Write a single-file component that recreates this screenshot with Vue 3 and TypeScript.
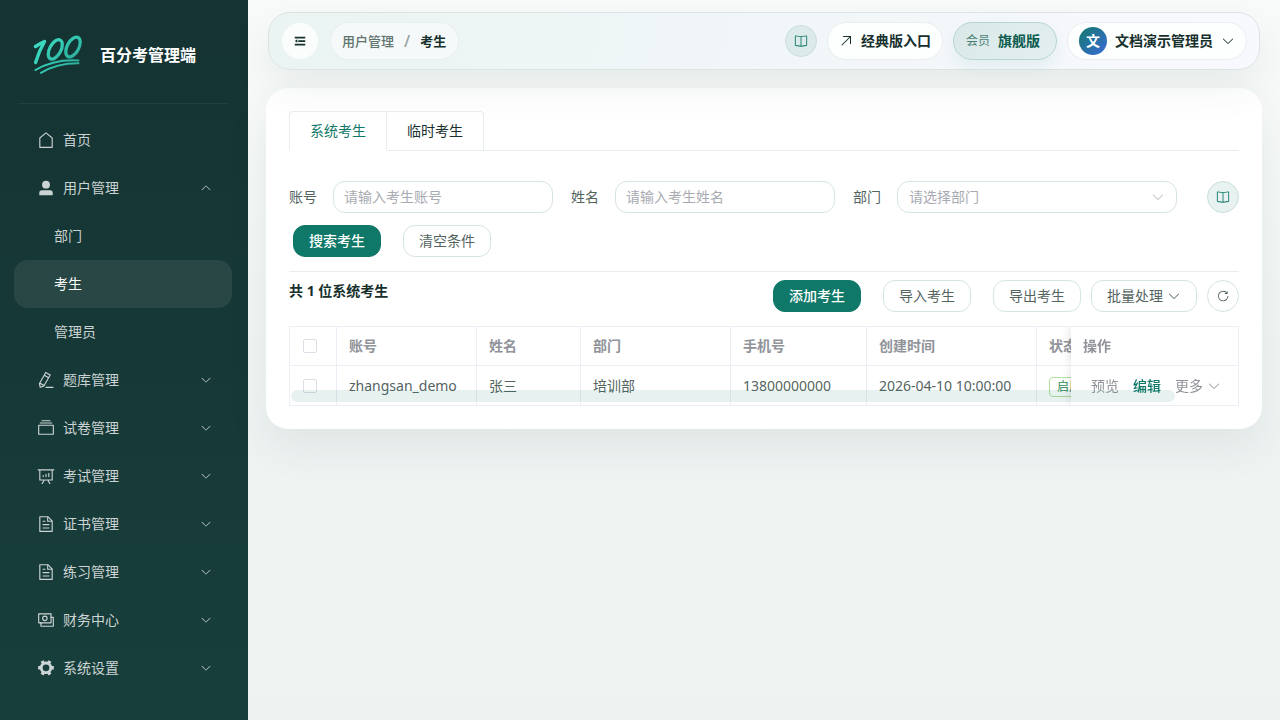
<script setup lang="ts">
import { ref } from 'vue'

interface MenuItem {
  label: string
  icon?: string
  open?: boolean
  children?: string[]
  leaf?: boolean
}

const icons: Record<string, string[]> = {
  house: ['M192 413.952V896h640V413.952L512 147.328zM139.52 374.4l352-293.312a32 32 0 0 1 40.96 0l352 293.312A32 32 0 0 1 896 398.976V928a32 32 0 0 1-32 32H160a32 32 0 0 1-32-32V398.976a32 32 0 0 1 11.52-24.576'],
  user: ['M288 320a224 224 0 1 0 448 0 224 224 0 1 0-448 0m544 608H160a32 32 0 0 1-32-32v-96a160 160 0 0 1 160-160h448a160 160 0 0 1 160 160v96a32 32 0 0 1-32 32z'],
  pen: ['m199.04 672.64 193.984 112 224-387.968-193.92-112-224 388.032zm-23.872 60.16 32.896 148.288 144.896-45.696zM455.04 229.248l193.92 112 56.704-98.112-193.984-112zM104.32 708.8l384-665.024 304.768 175.936L409.152 884.8h.064l-248.448 78.336zm384 254.272v-64h448v64z'],
  files: ['M128 384v448h768V384zm-32-64h832a32 32 0 0 1 32 32v512a32 32 0 0 1-32 32H96a32 32 0 0 1-32-32V352a32 32 0 0 1 32-32m64-128h704v64H160zm96-128h512v64H256z'],
  board: ['m665.216 768 110.848 192h-73.856L591.36 768H433.024L322.176 960H248.32l110.848-192H160a32 32 0 0 1-32-32V192H64a32 32 0 0 1 0-64h896a32 32 0 1 1 0 64h-64v544a32 32 0 0 1-32 32zM832 192H192v512h640zM352 448a32 32 0 0 1 32 32v64a32 32 0 0 1-64 0v-64a32 32 0 0 1 32-32m160-64a32 32 0 0 1 32 32v128a32 32 0 0 1-64 0V416a32 32 0 0 1 32-32m160-64a32 32 0 0 1 32 32v192a32 32 0 1 1-64 0V352a32 32 0 0 1 32-32'],
  document: ['M832 384H576V128H192v768h640zm-26.496-64L640 154.496V320zM160 64h480l256 256v608a32 32 0 0 1-32 32H160a32 32 0 0 1-32-32V96a32 32 0 0 1 32-32m160 448h384v64H320zm0-192h160v64H320zm0 384h384v64H320z'],
  money: [
    'M256 640v192h640V384H768v-64h150.976c14.272 0 19.456 1.472 24.64 4.288a29.06 29.06 0 0 1 12.16 12.096c2.752 5.184 4.224 10.368 4.224 24.64v493.952c0 14.272-1.472 19.456-4.288 24.64a29.06 29.06 0 0 1-12.096 12.16c-5.184 2.752-10.368 4.224-24.64 4.224H233.024c-14.272 0-19.456-1.472-24.64-4.288a29.06 29.06 0 0 1-12.16-12.096c-2.688-5.184-4.224-10.368-4.224-24.576V640z',
    'M768 192H128v448h640zm64-22.976v493.952c0 14.272-1.472 19.456-4.288 24.64a29.06 29.06 0 0 1-12.096 12.16c-5.184 2.752-10.304 4.224-24.64 4.224H105.024c-14.272 0-19.456-1.472-24.64-4.288a29.06 29.06 0 0 1-12.16-12.096C65.536 682.432 64 677.248 64 663.04V169.024c0-14.272 1.472-19.456 4.288-24.64a29.06 29.06 0 0 1 12.096-12.16C85.568 129.536 90.752 128 104.96 128h685.952c14.272 0 19.456 1.472 24.64 4.288a29.06 29.06 0 0 1 12.16 12.096c2.752 5.184 4.224 10.368 4.224 24.64z',
    'M448 576a160 160 0 1 1 0-320 160 160 0 0 1 0 320m0-64a96 96 0 1 0 0-192 96 96 0 0 0 0 192',
  ],
  gear: ['M764.416 254.72a351.68 351.68 0 0 1 86.336 149.184H960v192.064H850.752a351.68 351.68 0 0 1-86.336 149.312l54.72 94.72-166.272 96-54.592-94.72a352.64 352.64 0 0 1-172.48 0L371.136 936l-166.272-96 54.72-94.72a351.68 351.68 0 0 1-86.336-149.312H64v-192h109.248a351.68 351.68 0 0 1 86.336-149.312L204.8 160l166.208-96h.192l54.656 94.592a352.64 352.64 0 0 1 172.48 0L652.8 64h.128L819.2 160l-54.72 94.72zM704 499.968a192 192 0 1 0-384 0 192 192 0 0 0 384 0'],
}
const arrow = 'M831.872 340.864 512 652.672 192.128 340.864a30.59 30.59 0 0 0-42.752 0 29.12 29.12 0 0 0 0 41.6L489.664 714.24a32 32 0 0 0 44.672 0l340.288-331.712a29.12 29.12 0 0 0 0-41.728 30.59 30.59 0 0 0-42.752 0z'
const book = 'm512 863.36 384-54.848v-638.72L525.568 222.72a96 96 0 0 1-27.136 0L128 169.792v638.72zM137.024 106.432l370.432 52.928a32 32 0 0 0 9.088 0l370.432-52.928A64 64 0 0 1 960 169.792v638.72a64 64 0 0 1-54.976 63.36l-388.48 55.488a32 32 0 0 1-9.088 0l-388.48-55.488A64 64 0 0 1 64 808.512v-638.72a64 64 0 0 1 73.024-63.36z'

const menu = ref<MenuItem[]>([
  { label: '首页', icon: 'house', leaf: true },
  { label: '用户管理', icon: 'user', open: true, children: ['部门', '考生', '管理员'] },
  { label: '题库管理', icon: 'pen' },
  { label: '试卷管理', icon: 'files' },
  { label: '考试管理', icon: 'board' },
  { label: '证书管理', icon: 'document' },
  { label: '练习管理', icon: 'document' },
  { label: '财务中心', icon: 'money' },
  { label: '系统设置', icon: 'gear' },
])
const activePage = ref('考生')
const tabs = ['系统考生', '临时考生']
const activeTab = ref(tabs[0])
const account = ref('')
const realName = ref('')
const department = ref('')

interface Student {
  account: string
  name: string
  department: string
  phone: string
  created: string
  status: string
}
const students: Student[] = [
  { account: 'zhangsan_demo', name: '张三', department: '培训部', phone: '13800000000', created: '2026-04-10 10:00:00', status: '启用' },
]
const clearFilters = () => {
  account.value = ''
  realName.value = ''
  department.value = ''
}
</script>

<template>
  <div class="layout">
    <aside class="sidebar">
      <div class="brand">
        <svg class="logo" viewBox="0 0 52 40" aria-hidden="true">
          <defs>
            <linearGradient id="logo-fill" gradientUnits="userSpaceOnUse" x1="0" y1="0" x2="50" y2="40">
              <stop offset="0" stop-color="#3fe6cb" />
              <stop offset="1" stop-color="#27a493" />
            </linearGradient>
          </defs>
          <g fill="none" stroke="url(#logo-fill)" stroke-linecap="round" stroke-linejoin="round">
            <path stroke-width="3.4" d="M3.5 11.5Q8 8.5 12.5 6.5Q7 16 3.6 27.5" />
            <ellipse stroke-width="3.2" cx="23.3" cy="14.4" rx="5.6" ry="10.6" transform="rotate(28 23.3 14.4)" />
            <ellipse stroke-width="3.2" cx="41" cy="12" rx="5.8" ry="10.8" transform="rotate(28 41 12)" />
            <path stroke-width="2" d="M3.5 35Q22 24 46.5 25.4M9 37.8Q25 28 46.5 28.2" />
          </g>
        </svg>
        <span class="brand-name">百分考管理端</span>
      </div>
      <nav class="menu">
        <template v-for="item in menu" :key="item.label">
          <button type="button" class="menu-item" @click="item.open = !item.open">
            <svg class="menu-icon" viewBox="0 0 1024 1024"><path v-for="d in icons[item.icon!]" :key="d" :d="d" /></svg>
            <span class="menu-label">{{ item.label }}</span>
            <svg v-if="!item.leaf" class="arrow" :class="{ up: item.open }" viewBox="0 0 1024 1024"><path :d="arrow" /></svg>
          </button>
          <template v-if="item.open && item.children">
            <button
              v-for="child in item.children"
              :key="child"
              type="button"
              class="menu-item sub"
              :class="{ active: child === activePage }"
              @click="activePage = child"
            >{{ child }}</button>
          </template>
        </template>
      </nav>
    </aside>

    <main class="main">
      <header class="topbar">
        <button type="button" class="fold" aria-label="收起菜单">
          <svg viewBox="0 0 1024 1024"><path d="M896 192H128v128h768zm0 256H384v128h512zm0 256H128v128h768zM320 384 128 512l192 128z" /></svg>
        </button>
        <nav class="pill crumbs">
          <a href="#">用户管理</a><span class="slash">/</span><strong>考生</strong>
        </nav>
        <div class="top-actions">
          <button type="button" class="guide" aria-label="帮助文档">
            <svg viewBox="0 0 1024 1024"><path :d="book" /><path d="M480 192h64v704h-64z" /></svg>
          </button>
          <a class="pill classic" href="#">
            <svg viewBox="0 0 1024 1024"><path d="M768 256H353.6a32 32 0 1 1 0-64H800a32 32 0 0 1 32 32v448a32 32 0 0 1-64 0z" /><path d="M777.344 201.344a32 32 0 0 1 45.312 45.312l-544 544a32 32 0 0 1-45.312-45.312z" /></svg>
            经典版入口
          </a>
          <button type="button" class="pill member"><span>会员</span><strong>旗舰版</strong></button>
          <button type="button" class="pill account">
            <span class="avatar">文</span>
            <span>文档演示管理员</span>
            <svg viewBox="0 0 1024 1024"><path :d="arrow" /></svg>
          </button>
        </div>
      </header>

      <section class="card">
        <div class="tabs" role="tablist">
          <button
            v-for="tab in tabs"
            :key="tab"
            type="button"
            role="tab"
            class="tab"
            :class="{ active: tab === activeTab }"
            :aria-selected="tab === activeTab"
            @click="activeTab = tab"
          >{{ tab }}</button>
        </div>

        <form class="filters" @submit.prevent>
          <div class="fields">
            <div class="field">
              <label for="account">账号</label>
              <input id="account" v-model="account" type="text" placeholder="请输入考生账号" />
            </div>
            <div class="field">
              <label for="real-name">姓名</label>
              <input id="real-name" v-model="realName" type="text" placeholder="请输入考生姓名" />
            </div>
            <div class="field wide">
              <label for="department">部门</label>
              <div class="select">
                <select id="department" v-model="department">
                  <option value="">请选择部门</option>
                  <option value="培训部">培训部</option>
                </select>
                <svg viewBox="0 0 1024 1024"><path :d="arrow" /></svg>
              </div>
            </div>
            <button type="button" class="guide" aria-label="使用说明">
              <svg viewBox="0 0 1024 1024"><path :d="book" /><path d="M480 192h64v704h-64z" /></svg>
            </button>
          </div>
          <div class="submit">
            <button type="submit" class="btn primary">搜索考生</button>
            <button type="button" class="btn" @click="clearFilters">清空条件</button>
          </div>
        </form>

        <div class="toolbar">
          <h2>共 {{ students.length }} 位系统考生</h2>
          <div class="tools">
            <button type="button" class="btn primary">添加考生</button>
            <button type="button" class="btn">导入考生</button>
            <div class="tool-group">
              <button type="button" class="btn">导出考生</button>
              <button type="button" class="btn">批量处理<svg viewBox="0 0 1024 1024"><path :d="arrow" /></svg></button>
              <button type="button" class="refresh" aria-label="刷新">
                <svg viewBox="0 0 1024 1024"><path d="M784.512 230.272v-50.56a32 32 0 1 1 64 0v149.056a32 32 0 0 1-32 32H667.52a32 32 0 1 1 0-64h92.992A320 320 0 1 0 524.8 833.152a320 320 0 0 0 320-320h64a384 384 0 0 1-384 384 384 384 0 0 1-384-384 384 384 0 0 1 643.712-282.88" /></svg>
              </button>
            </div>
          </div>
        </div>

        <div class="table-box">
          <div class="table-scroll">
            <table>
              <colgroup>
                <col class="c-check" /><col class="c-account" /><col class="c-name" /><col class="c-dept" />
                <col class="c-phone" /><col class="c-time" /><col class="c-status" /><col class="c-ops" />
              </colgroup>
              <thead>
                <tr>
                  <th><input type="checkbox" aria-label="全选" /></th>
                  <th>账号</th><th>姓名</th><th>部门</th><th>手机号</th><th>创建时间</th><th>状态</th>
                  <th class="fixed">操作</th>
                </tr>
              </thead>
              <tbody>
                <tr v-for="s in students" :key="s.account">
                  <td><input type="checkbox" :aria-label="s.name" /></td>
                  <td>{{ s.account }}</td>
                  <td>{{ s.name }}</td>
                  <td>{{ s.department }}</td>
                  <td>{{ s.phone }}</td>
                  <td>{{ s.created }}</td>
                  <td><span class="tag">{{ s.status }}</span></td>
                  <td class="fixed">
                    <div class="ops">
                      <button type="button">预览</button>
                      <button type="button" class="edit">编辑</button>
                      <button type="button">更多<svg viewBox="0 0 1024 1024"><path :d="arrow" /></svg></button>
                    </div>
                  </td>
                </tr>
              </tbody>
            </table>
          </div>
          <div class="scroll-thumb"></div>
        </div>
      </section>
    </main>
  </div>
</template>

<style>
body {
  margin: 0;
}
</style>

<style scoped>
.layout,
.layout * {
  box-sizing: border-box;
}
.layout {
  display: flex;
  min-height: 100vh;
  font-family: "Noto Sans", "Noto Sans CJK SC", sans-serif;
  font-size: 14px;
  line-height: 20px;
  color: #17302d;
  background: linear-gradient(180deg, #f9fbfa 0%, #eff4f3 60%, #eef3f2 100%);
}
button,
input,
select {
  font: inherit;
  color: inherit;
  margin: 0;
}
button {
  padding: 0;
  border: 0;
  background: none;
  cursor: pointer;
}
a {
  color: inherit;
  text-decoration: none;
}
svg {
  display: block;
  flex: none;
  fill: currentColor;
}

.sidebar {
  flex: none;
  width: 248px;
  padding: 0 16px 24px 14px;
  background: linear-gradient(180deg, #143332 0%, #183f3c 100%);
}
.brand {
  display: flex;
  align-items: center;
  gap: 16px;
  height: 104px;
  margin: 0 4px 12px;
  padding: 6px 0 0 14px;
  border-bottom: 1px solid rgba(255, 255, 255, 0.06);
}
.logo {
  width: 52px;
  height: 40px;
}
.brand-name {
  font-size: 16px;
  font-weight: 700;
  color: #fff;
}
.menu {
  display: flex;
  flex-direction: column;
}
.menu-item {
  display: flex;
  align-items: center;
  height: 48px;
  padding: 0 20px 0 23px;
  border-radius: 14px;
  color: rgba(255, 255, 255, 0.78);
  text-align: left;
}
.menu-icon {
  width: 18px;
  height: 18px;
  margin-right: 8px;
}
.menu-label {
  flex: 1;
}
.arrow {
  width: 12px;
  height: 12px;
}
.arrow.up {
  transform: rotate(180deg);
}
.menu-item.sub {
  padding-left: 40px;
}
.menu-item.active {
  color: #fff;
  background: rgba(255, 255, 255, 0.08);
}

.main {
  flex: 1;
  min-width: 0;
  padding: 12px 18px 24px;
}
.topbar {
  position: relative;
  z-index: 1;
  display: flex;
  align-items: center;
  height: 58px;
  margin: 0 2px 18px;
  padding: 0 12px 0 13px;
  border: 1px solid #dae5e3;
  border-radius: 22px;
  background: linear-gradient(100deg, #eaf4f2 0%, #f1f6f8 50%, #f8f9fe 100%);
  box-shadow: 0 16px 40px rgba(20, 60, 52, 0.08);
}
.fold {
  display: grid;
  place-items: center;
  width: 36px;
  height: 36px;
  margin-right: 12px;
  border-radius: 50%;
  background: #fbfdfd;
}
.fold svg {
  width: 14px;
  height: 14px;
}
.pill {
  display: flex;
  align-items: center;
  height: 38px;
  border: 1px solid #e9eff0;
  border-radius: 19px;
  background: #fdfefe;
  font-weight: 600;
}
.crumbs {
  padding: 0 12px 0 11px;
  background: #f5f9fa;
  font-size: 13px;
  font-weight: 500;
  color: #5f736f;
}
.crumbs strong {
  font-weight: 700;
  color: #17302d;
}
.slash {
  margin: 0 10px;
  font-size: 16px;
  color: #93a29f;
}
.top-actions {
  display: flex;
  align-items: center;
  gap: 10px;
  margin-left: auto;
}
.guide {
  display: grid;
  place-items: center;
  width: 32px;
  height: 32px;
  border: 1px solid #c9dfdc;
  border-radius: 50%;
  background: #e8f2f0;
  color: #0f7868;
}
.guide svg {
  width: 14px;
  height: 14px;
}
.topbar .guide {
  background: #dcebe9;
}
.classic {
  gap: 7px;
  padding: 0 11px 0 10px;
}
.classic svg {
  width: 16px;
  height: 16px;
}
.member {
  gap: 8px;
  padding: 0 16px 0 12px;
  border-color: #b5d6d2;
  background: linear-gradient(135deg, #d9e9e7, #e4eff0);
  box-shadow: 0 8px 16px rgba(15, 120, 104, 0.07);
  color: #0b5a4e;
}
.member span {
  font-size: 12px;
  font-weight: 400;
  color: #4a8077;
}
.member strong {
  font-weight: 700;
}
.account {
  gap: 8px;
  padding: 0 11px;
}
.account svg {
  width: 14px;
  height: 14px;
}
.avatar {
  display: grid;
  place-items: center;
  width: 28px;
  height: 28px;
  border-radius: 50%;
  background: linear-gradient(135deg, #127a6c, #3a6ad8);
  color: #fff;
  font-weight: 700;
}

.card {
  padding: 23px;
  border-radius: 22px;
  background: #fff;
  box-shadow: 0 18px 40px rgba(20, 60, 52, 0.08);
}
.tabs {
  display: flex;
  height: 40px;
  border-bottom: 1px solid #e8eeed;
}
.tab {
  height: 40px;
  padding: 0 20px;
  border: 1px solid #e8eeed;
  border-left-width: 0;
  background: #fff;
}
.tab:first-child {
  border-left-width: 1px;
  border-radius: 4px 0 0 0;
}
.tab:last-child {
  border-radius: 0 4px 0 0;
}
.tab.active {
  border-bottom-color: #fff;
  color: #0f7868;
}
.filters {
  padding: 30px 0 14px;
  border-bottom: 1px solid #e8eeed;
}
.fields {
  display: flex;
  align-items: center;
  gap: 18px;
}
.field {
  display: flex;
  align-items: center;
  gap: 16px;
  width: 264px;
  color: #53645f;
}
.field.wide {
  width: 324px;
}
.fields .guide {
  margin-left: auto;
}
label {
  flex: none;
}
.field input,
.select {
  flex: 1;
  min-width: 0;
  height: 32px;
}
.field input,
select {
  border: 1px solid #d6e5e2;
  border-radius: 12px;
  background: #fff;
  outline: none;
}
.field input {
  padding: 0 10px 2px;
}
.field input::placeholder {
  color: #a8abb2;
  opacity: 1;
}
.select {
  position: relative;
}
select {
  width: 100%;
  height: 100%;
  padding: 0 11px;
  appearance: none;
  color: #a8abb2;
}
.select svg {
  position: absolute;
  right: 12px;
  top: 9px;
  width: 14px;
  height: 14px;
  color: #b3b7bd;
  pointer-events: none;
}
.submit {
  display: flex;
  gap: 22px;
  padding: 12px 4px 0;
}
.btn {
  display: flex;
  align-items: center;
  justify-content: center;
  gap: 4px;
  height: 32px;
  padding: 0 15px;
  border: 1px solid #d6e5e2;
  border-radius: 12px;
  background: #fff;
  color: #53645f;
}
.btn.primary {
  border-color: #0f7868;
  background: #0f7868;
  color: #fff;
  font-weight: 500;
}
.btn svg {
  width: 14px;
  height: 14px;
}
.toolbar {
  display: flex;
  justify-content: space-between;
  align-items: flex-start;
  padding: 8px 0 14px;
}
h2 {
  margin: 0;
  font-size: 14px;
  line-height: 22px;
  font-weight: 700;
}
.tools {
  display: flex;
  gap: 22px;
}
.tool-group {
  display: flex;
  gap: 10px;
}
.refresh {
  display: grid;
  place-items: center;
  width: 32px;
  height: 32px;
  border: 1px solid #d6e5e2;
  border-radius: 50%;
  color: #53645f;
}
.refresh svg {
  width: 14px;
  height: 14px;
}

.table-box {
  position: relative;
  border: 1px solid #ebeef5;
  border-bottom-width: 0;
}
.table-scroll {
  overflow: hidden;
}
table {
  width: 100%;
  min-width: 1020px;
  table-layout: fixed;
  border-collapse: separate;
  border-spacing: 0;
}
.c-check { width: 47px; }
.c-account { width: 140px; }
.c-name { width: 104px; }
.c-dept { width: 150px; }
.c-phone { width: 136px; }
.c-time { width: 170px; }
.c-ops { width: 167px; }
th,
td {
  height: 40px;
  padding: 0 12px;
  border-right: 1px solid #ebeef5;
  border-bottom: 1px solid #ebeef5;
  background: #fff;
  text-align: left;
  white-space: nowrap;
  color: #53645f;
}
th {
  height: 39px;
  font-weight: 700;
  color: #909399;
}
.fixed {
  position: sticky;
  right: 0;
  border-right: 0;
  box-shadow: 0 0 10px rgba(0, 0, 0, 0.14);
  clip-path: inset(0 0 0 -12px);
}
th:nth-last-child(2),
td:nth-last-child(2) {
  border-right: 0;
}
input[type="checkbox"] {
  display: block;
  appearance: none;
  width: 14px;
  height: 14px;
  margin-left: 1px;
  border: 1px solid #dcdfe6;
  border-radius: 2px;
  background: #fff;
}
.tag {
  display: inline-block;
  height: 20px;
  margin-top: 2px;
  padding: 0 7px;
  border: 1px solid #b3e19d;
  border-radius: 4px;
  font-size: 12px;
  line-height: 18px;
  color: #2c8c50;
  vertical-align: middle;
}
.ops {
  display: flex;
  gap: 14px;
  padding-left: 8px;
}
.ops button {
  display: flex;
  align-items: center;
  gap: 4px;
  color: #909399;
}
.ops .edit {
  font-weight: 500;
  color: #0f7868;
}
.ops svg {
  width: 14px;
  height: 14px;
}
.scroll-thumb {
  position: absolute;
  left: 1px;
  right: 63px;
  bottom: 4px;
  height: 12px;
  border-radius: 6px;
  background: rgba(15, 120, 104, 0.1);
}
</style>
